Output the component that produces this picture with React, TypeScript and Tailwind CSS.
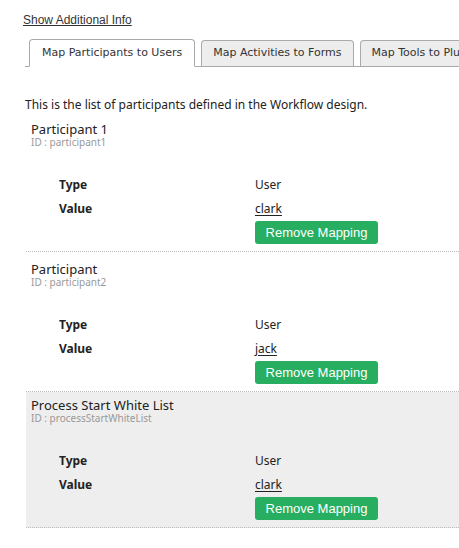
const participants = [
  { name: "Participant 1", id: "participant1", type: "User", value: "clark", shaded: false },
  { name: "Participant", id: "participant2", type: "User", value: "jack", shaded: false },
  { name: "Process Start White List", id: "processStartWhiteList", type: "User", value: "clark", shaded: true },
];

function Section({ p }: { p: (typeof participants)[number] }) {
  return (
    <div className={"border-b border-dotted border-[#bbb] pl-[5px] pb-[7px] " + (p.shaded ? "bg-[#eeeeee] pt-[5px]" : "pt-[9px]")}>
      <div className="text-[13px] leading-[16px] text-[#222]">{p.name}</div>
      <div className="text-[10px] leading-[11px] text-[#999]">ID : {p.id}</div>
      <div className="mt-[29px] grid grid-cols-[196px_1fr] pl-[28px] text-[12px] text-[#222] gap-y-[8px]">
        <div className="font-bold leading-[16px]">Type</div>
        <div className="leading-[16px]">{p.type}</div>
        <div className="font-bold leading-[16px]">Value</div>
        <div className="leading-[16px] flex flex-col items-start">
          <a href="#" className="underline underline-offset-2 text-[#222]">{p.value}</a>
          <button className="mt-[4px] w-[123px] h-[23px] rounded-[3px] bg-[#27ae60] text-white text-[13px] font-['Liberation_Sans'] leading-[23px]">
            Remove Mapping
          </button>
        </div>
      </div>
    </div>
  );
}

export default function App() {
  return (
    <div className="w-[459px] h-[548px] overflow-hidden bg-white font-['Noto_Sans',sans-serif]">
      <div className="pl-[23px] pt-[13px] text-[12px] leading-[14px]">
        <a href="#" className="underline text-[#333] font-['Liberation_Sans']">Show Additional Info</a>
      </div>
      <div className="ml-[25px] mt-[12px] flex items-end border-b border-[#aaa] pl-[4px] gap-[6px] whitespace-nowrap font-['DejaVu_Sans'] text-[11px] text-[#333]">
        <div className="-mb-px h-[28px] px-[12px] flex items-center bg-white border border-[#aaa] border-b-white rounded-t-[4px]">Map Participants to Users</div>
        <div className="h-[26px] px-[11px] flex items-center bg-[#ededed] border border-[#aaa] border-b-0 rounded-t-[4px]">Map Activities to Forms</div>
        <div className="h-[26px] px-[11px] flex items-center bg-[#ededed] border border-[#aaa] border-b-0 rounded-t-[4px]">Map Tools to Plugins</div>
      </div>
      <div className="ml-[25px] mt-[30px] text-[12px] leading-[16px] text-[#222]">This is the list of participants defined in the Workflow design.</div>
      <div className="ml-[26px] -mt-px">
        {participants.map((p, i) => (
          <Section key={i} p={p} />
        ))}
      </div>
    </div>
  );
}
